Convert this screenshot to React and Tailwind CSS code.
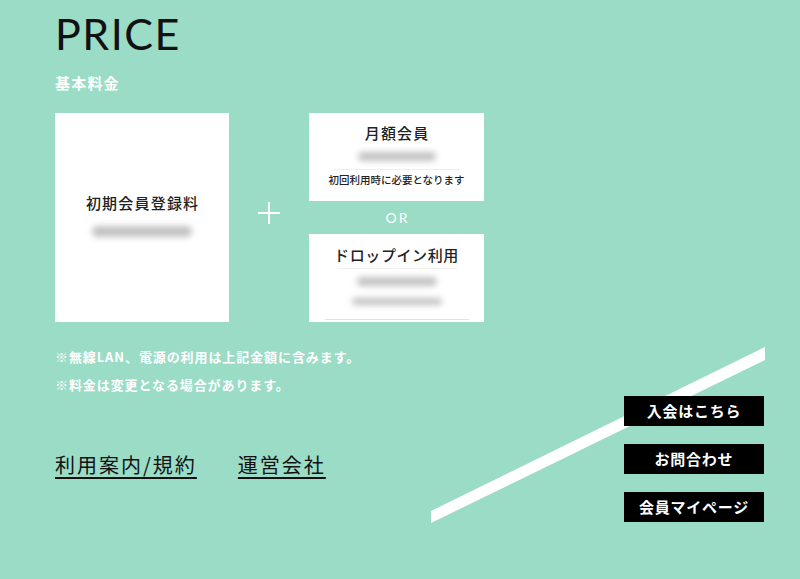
import React from "react";

const jp = { fontFamily: '"Noto Sans CJK JP", "Noto Sans", sans-serif' };

function Blur({ w, h = 10, className = "" }) {
  return (
    <div
      className={`bg-[#a8a8a8] rounded-full blur-[3px] opacity-70 ${className}`}
      style={{ width: w, height: h }}
    />
  );
}

export default function App() {
  return (
    <div className="relative w-full min-h-[579px] bg-[#9adcc6] overflow-hidden" style={jp}>
      {/* diagonal stripe */}
      <svg className="absolute left-0 top-0 pointer-events-none" width="800" height="579">
        <polygon points="431,511 765,347 765,360 431,523" fill="#fff" />
      </svg>

      <div className="relative pl-[55px] pt-[12px]">
        <h1
          className="text-[43px] leading-none font-normal tracking-[0.035em] text-[#111]"
          style={{ fontFamily: "Lato, 'Open Sans', sans-serif" }}
        >
          PRICE
        </h1>

        <p className="mt-[20px] text-[15px] leading-none font-bold text-white tracking-[0.08em]">
          基本料金
        </p>

        <div className="mt-[23px] flex">
          {/* initial fee */}
          <div className="w-[174px] h-[209px] bg-white flex flex-col items-center justify-center gap-[16px] pb-[4px]">
            <p className="text-[15px] leading-none text-[#222] tracking-[0.08em] pl-[0.08em] font-medium">初期会員登録料</p>
            <Blur w={100} h={11} />
          </div>

          {/* plus */}
          <div className="w-[80px] flex items-center justify-center">
            <svg width="24" height="24" viewBox="0 0 24 24" className="mt-[-10px]">
              <path d="M12 1v22M1 12h22" stroke="#fff" strokeWidth="2" />
            </svg>
          </div>

          {/* options */}
          <div className="w-[175px] flex flex-col">
            <div className="h-[88px] bg-white flex flex-col items-center pt-[12px]">
              <p className="text-[15px] leading-none text-[#222] tracking-[0.08em] pl-[0.08em] font-medium">月額会員</p>
              <Blur w={78} h={9} className="mt-[12px]" />
              <div className="mt-[8px] w-[126px] h-px bg-[#eee]" />
              <p className="mt-[5px] text-[10.5px] leading-none text-[#222] font-medium">初回利用時に必要となります</p>
            </div>
            <div className="h-[33px] flex items-center justify-center">
              <span
                className="text-[14px] leading-none text-white tracking-[0.15em] pl-[0.15em]"
                style={{ fontFamily: "Lato, sans-serif" }}
              >
                OR
              </span>
            </div>
            <div className="h-[88px] bg-white flex flex-col items-center pt-[13px]">
              <p className="text-[15px] leading-none text-[#222] tracking-[0.04em] font-medium">ドロップイン利用</p>
              <div className="mt-[6px] w-[118px] h-px bg-[#eee]" />
              <Blur w={80} h={9} className="mt-[8px]" />
              <Blur w={90} h={7} className="mt-[12px]" />
              <div className="mt-auto mb-[2px] w-[144px] h-px bg-[#c8eee0]" />
            </div>
          </div>
        </div>

        <div className="flex">
          <div className="flex flex-col">
            <p className="mt-[28px] text-[13px] leading-none font-bold text-white tracking-[0.07em]">
              ※無線LAN、電源の利用は上記金額に含みます。
            </p>
            <p className="mt-[15px] text-[13px] leading-none font-bold text-white tracking-[0.07em]">
              ※料金は変更となる場合があります。
            </p>
            <div className="mt-[64px] flex gap-[41px] text-[20px] leading-none text-[#111] tracking-[0.1em]">
              <a className="underline underline-offset-[4px] decoration-[1.5px]">利用案内/規約</a>
              <a className="underline underline-offset-[4px] decoration-[1.5px]">運営会社</a>
            </div>
          </div>

          <div className="ml-auto mr-[36px] mt-[74px] flex flex-col gap-[18px]">
            {["入会はこちら", "お問合わせ", "会員マイページ"].map((t) => (
              <a
                key={t}
                className="w-[140px] h-[30px] bg-black text-white text-[15px] font-bold flex items-center justify-center tracking-[0.05em]"
              >
                {t}
              </a>
            ))}
          </div>
        </div>
      </div>
    </div>
  );
}
